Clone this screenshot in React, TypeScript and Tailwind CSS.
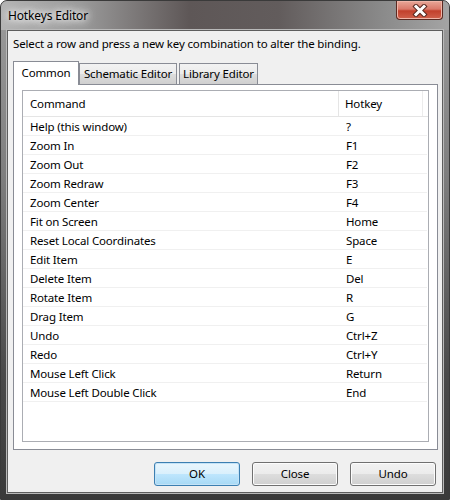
import React from "react";

interface Binding {
  command: string;
  hotkey: string;
}

const BINDINGS: Binding[] = [
  { command: "Help (this window)", hotkey: "?" },
  { command: "Zoom In", hotkey: "F1" },
  { command: "Zoom Out", hotkey: "F2" },
  { command: "Zoom Redraw", hotkey: "F3" },
  { command: "Zoom Center", hotkey: "F4" },
  { command: "Fit on Screen", hotkey: "Home" },
  { command: "Reset Local Coordinates", hotkey: "Space" },
  { command: "Edit Item", hotkey: "E" },
  { command: "Delete Item", hotkey: "Del" },
  { command: "Rotate Item", hotkey: "R" },
  { command: "Drag Item", hotkey: "G" },
  { command: "Undo", hotkey: "Ctrl+Z" },
  { command: "Redo", hotkey: "Ctrl+Y" },
  { command: "Mouse Left Click", hotkey: "Return" },
  { command: "Mouse Left Double Click", hotkey: "End" },
];

const CloseGlyph: React.FC = () => (
  <svg width="16" height="13" viewBox="0 0 16 13">
    <path d="M4 2.5 L12 10.5 M12 2.5 L4 10.5" stroke="#5a2a22" strokeWidth="5" strokeLinecap="square" />
    <path d="M4 2.5 L12 10.5 M12 2.5 L4 10.5" stroke="#ffffff" strokeWidth="3" strokeLinecap="square" />
  </svg>
);

const Button: React.FC<{ label: string; primary?: boolean }> = ({ label, primary }) => (
  <button
    className={
      primary
        ? "w-[86px] h-[24px] rounded-[3px] border border-[#3c7fb1] bg-[linear-gradient(to_bottom,#eaf6fd_0%,#d9f0fc_50%,#bee6fd_51%,#a7d9f5_100%)] shadow-[inset_0_0_0_1px_#c4e3f7] text-black"
        : "w-[86px] h-[24px] rounded-[3px] border border-[#707070] bg-[linear-gradient(to_bottom,#f2f2f2_0%,#ebebeb_50%,#dddddd_51%,#cfcfcf_100%)] shadow-[inset_0_0_0_1px_#fcfcfc] text-black"
    }
  >
    {label}
  </button>
);

export default function App() {
  return (
    <div className="w-[450px] h-[500px] flex flex-col rounded-t-[7px] border border-[#3a3a3a] bg-[linear-gradient(to_bottom,#9c9c9c_0%,#7e7e7e_35%,#4a4a4a_75%,#3a3a3a_100%)] font-['Noto_Sans',sans-serif] text-[11.5px] tracking-[-0.15px] text-black overflow-hidden">
      {/* title bar */}
      <div className="h-[29px] flex items-start rounded-t-[6px] bg-[linear-gradient(to_right,#b4b4b4_0%,#9a9a9a_18%,#5e5757_42%,#625c5c_62%,#8a8a8a_85%,#a4a4a4_100%)]">
        <div className="pl-[7px] pt-[7px] leading-[16px] text-[12px] [text-shadow:0_0_6px_#fff,0_0_10px_#fff,0_0_14px_#fff]">
          Hotkeys Editor
        </div>
        <div className="ml-auto mr-[6px] w-[47px] h-[19px] flex items-center justify-center rounded-b-[4px] border border-t-0 border-[#5b2a22] bg-[linear-gradient(to_bottom,#e8a798_0%,#d9796a_45%,#c2402c_55%,#d0614c_100%)] shadow-[inset_0_0_0_1px_#f0b5a8]">
          <CloseGlyph />
        </div>
      </div>

      {/* client area */}
      <div className="mx-[6px] h-[463px] flex flex-col border border-[#5e5e5e] bg-[#f0f0f0] shadow-[0_0_0_1px_#b9b9b9]">
        <div className="pl-[5px] pt-[5px] h-[30px] leading-[16px]">
          Select a row and press a new key combination to alter the binding.
        </div>

        {/* tabs */}
        <div className="ml-[5px] flex items-end h-[23px]">
          <div className="h-[24px] w-[66px] flex items-center justify-center bg-white border border-b-0 border-[#898c95] relative z-10 -mb-px pb-[2px]">
            Common
          </div>
          <div className="h-[21px] w-[98px] flex items-center justify-center bg-[linear-gradient(to_bottom,#f2f2f2_0%,#ebebeb_50%,#dddddd_51%,#cfcfcf_100%)] border border-b-0 border-[#898c95]">
            Schematic Editor
          </div>
          <div className="ml-[2px] h-[21px] w-[79px] flex items-center justify-center bg-[linear-gradient(to_bottom,#f2f2f2_0%,#ebebeb_50%,#dddddd_51%,#cfcfcf_100%)] border border-b-0 border-[#898c95]">
            Library Editor
          </div>
        </div>

        {/* tab panel */}
        <div className="ml-[5px] w-[425px] h-[366px] border border-[#898c95] bg-white pt-[5px] pl-[8px]">
          <div className="w-[407px] h-[352px] border border-[#abadb3] bg-white flex flex-col">
            <div className="h-[26px] flex border-b border-[#e5e5e5]">
              <div className="w-[316px] pl-[7px] pt-[1px] flex items-center border-r border-[#e5e5e5]">Command</div>
              <div className="w-[84px] pl-[6px] pt-[1px] flex items-center border-r border-[#ececec]">Hotkey</div>
            </div>
            {BINDINGS.map((b) => (
              <div key={b.command} className="h-[19px] flex items-center pt-[1px] border-b border-[#f0f0f0] mr-[1px]">
                <div className="w-[317px] pl-[7px] leading-[17px]">{b.command}</div>
                <div className="pl-[6px] leading-[17px]">{b.hotkey}</div>
              </div>
            ))}
          </div>
        </div>

        {/* buttons */}
        <div className="mt-[12px] mr-[6px] flex justify-end gap-[12px]">
          <Button label="OK" primary />
          <Button label="Close" />
          <Button label="Undo" />
        </div>
      </div>
    </div>
  );
}
